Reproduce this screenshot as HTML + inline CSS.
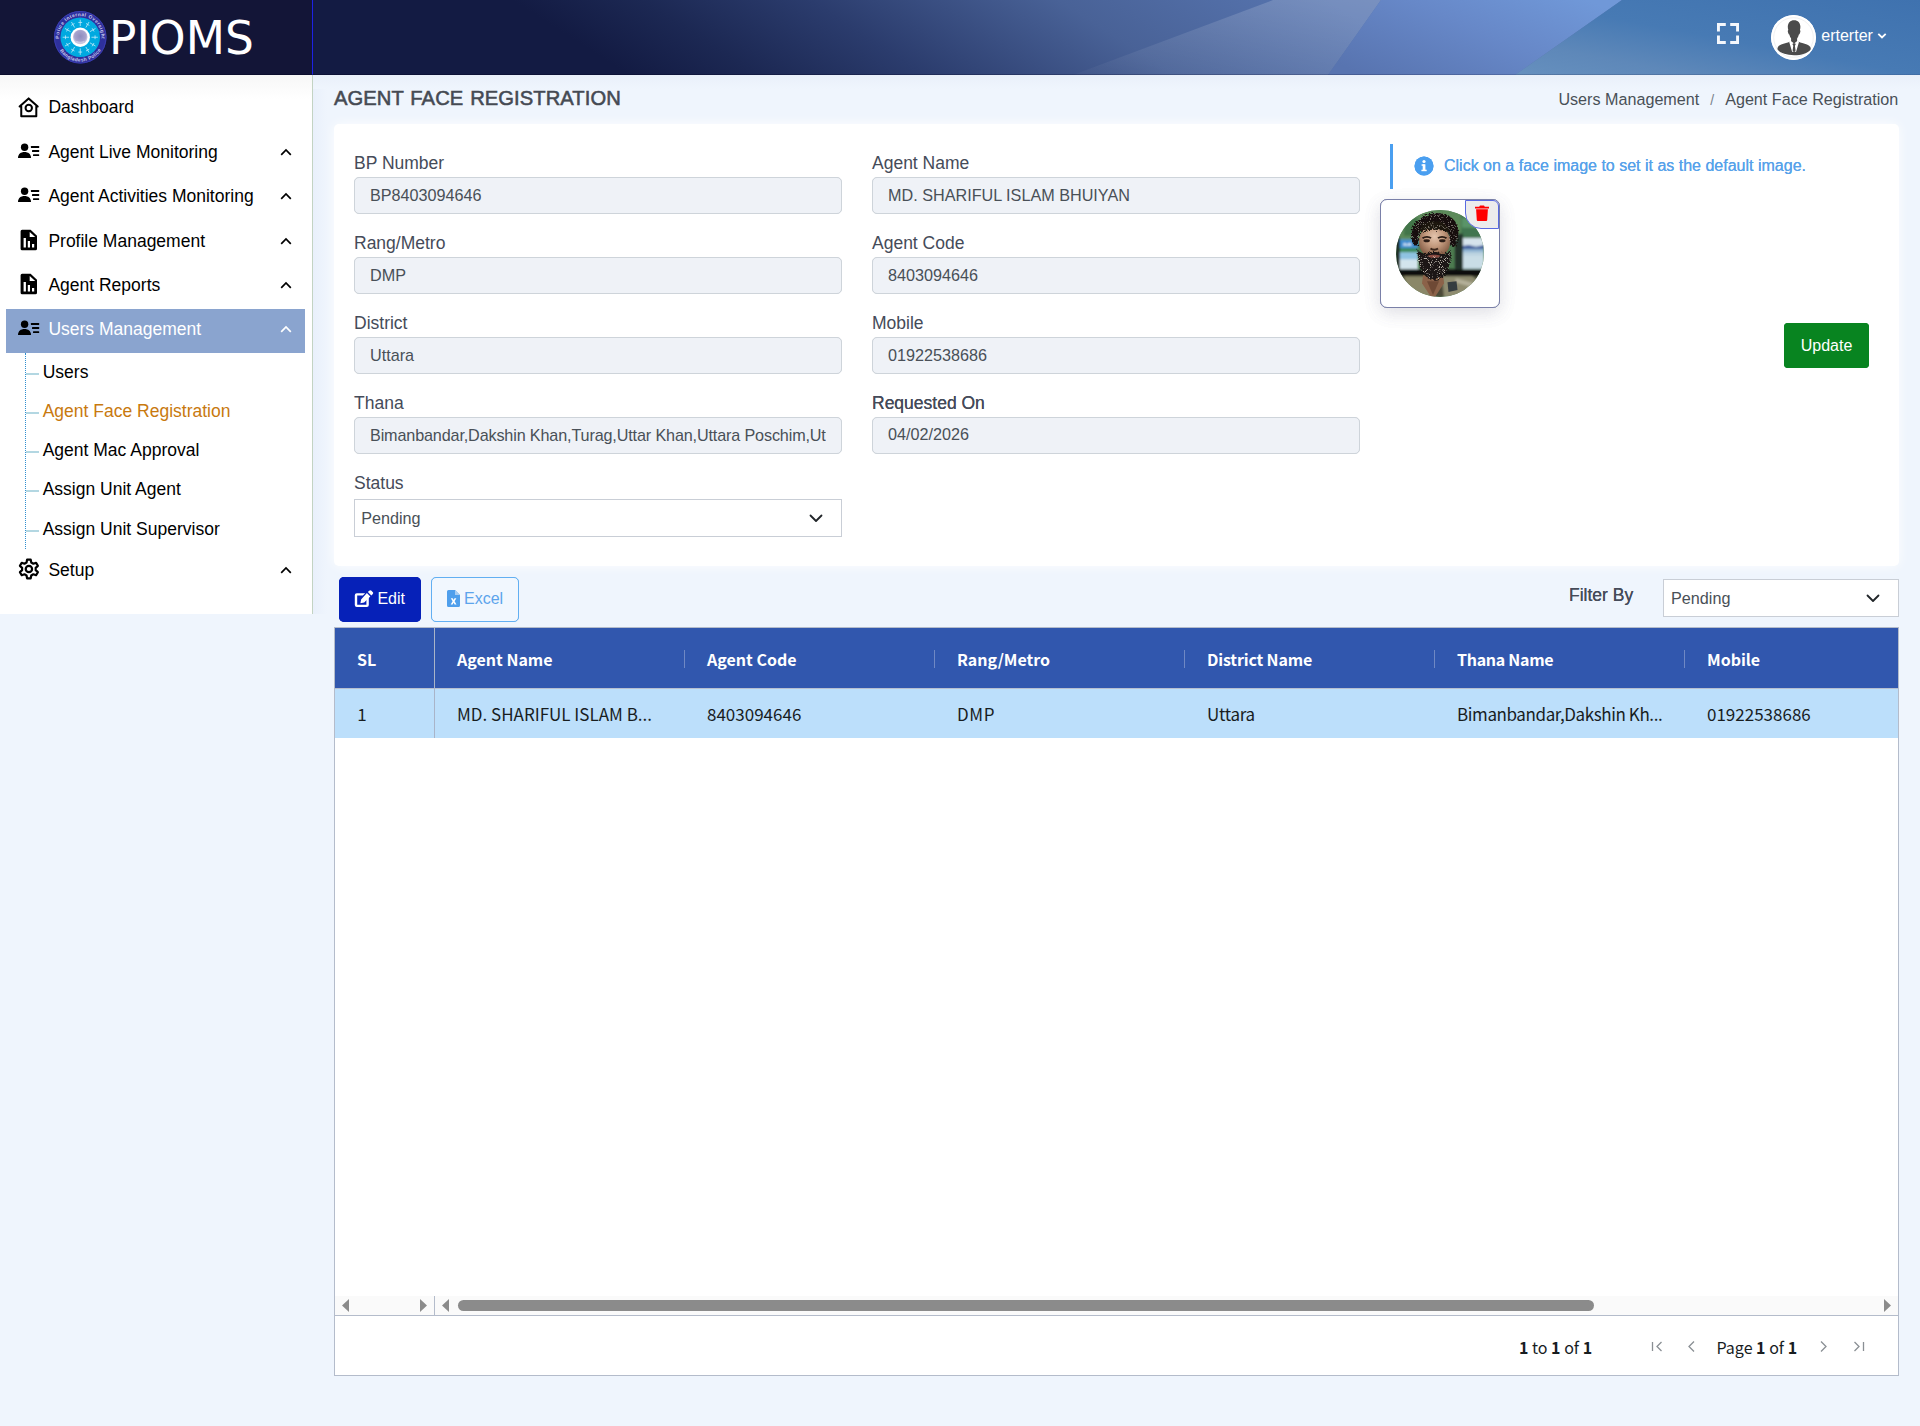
<!DOCTYPE html>
<html lang="en">
<head>
<meta charset="utf-8">
<title>PIOMS - Agent Face Registration</title>
<style>
*{box-sizing:border-box;margin:0;padding:0}
html,body{width:1920px;height:1426px;overflow:hidden}
body{font-family:"Liberation Sans",Arial,sans-serif;background:#eff5fd;color:#212529;position:relative}
.abs{position:absolute}
/* ---------- header ---------- */
#hdr{position:absolute;left:0;top:0;width:1920px;height:75px;background:#131b43;overflow:hidden}
#hdr svg.bg{position:absolute;left:312px;top:0}
#logo{position:absolute;left:0;top:0;width:313px;height:75px;background:#131537;border-right:1px solid #1d22e6}
#logo .txt{position:absolute;left:109px;top:10.500px;font-family:"DejaVu Sans","Liberation Sans",sans-serif;font-size:45.500px;line-height:56px;color:#fff;letter-spacing:0}
#logo svg{position:absolute;left:54px;top:11.200px}
#fs{position:absolute;left:1717px;top:23px}
#avatar{position:absolute;left:1771px;top:15px;width:45px;height:45px;border-radius:50%;background:#fff;overflow:hidden}
#uname{position:absolute;left:1821.300px;top:25.600px;font-size:16px;line-height:20px;color:#fff}
#ucaret{position:absolute;left:1877.400px;top:31.700px}
/* ---------- sidebar ---------- */
#side{position:absolute;left:0;top:75px;width:313px;height:539px;background:linear-gradient(#f7f7f7 0,#fff 24px);border-right:1px solid #c3d3c3}
.mi{position:absolute;left:6px;width:299px;height:44px;font-size:17.5px;line-height:44px;color:#000;white-space:nowrap}
.mi .ic{position:absolute;left:11px;top:11px;width:24px;height:22px;overflow:visible}
.mi .lb{position:absolute;left:42.400px;top:0}
.mi .ch{position:absolute;left:274px;top:18px}
.mi.act{background:#8aa4cf;color:#fff}
.mi.act .lb{top:-1.6px}.mi.act .ic{top:9.400px}.mi.act .ch{top:16.400px}
.sub{position:absolute;left:42.700px;font-size:17.500px;line-height:22px;color:#000;white-space:nowrap}
.sub.on{color:#c8790f}
.tick{position:absolute;left:26px;width:13px;height:2px;background:#b3d7e2}
#tree{position:absolute;left:25px;top:353px;width:0;height:196px;border-left:1px dotted #2f8fd0}
/* ---------- page head ---------- */
#title{position:absolute;left:334px;top:86.300px;font-size:20.200px;line-height:24px;color:#454a53;font-weight:400;white-space:nowrap;-webkit-text-stroke:.55px #454a53;letter-spacing:.06px;word-spacing:1.200px}
#crumb{position:absolute;right:21.700px;top:89.300px;font-size:16.150px;line-height:20px;color:#495057;white-space:nowrap}
#crumb i{font-style:normal;color:#7a828c;margin:0 11px;font-size:14px}
/* ---------- form card ---------- */
#card{position:absolute;left:334px;top:124px;width:1565px;height:442px;background:#fff;border-radius:5px;box-shadow:0 0 12px rgba(255,255,255,.9)}
.fl{position:absolute;font-size:17.5px;line-height:22px;color:#454b59;white-space:nowrap}
.fi{position:absolute;width:488px;height:37px;border:1px solid #ced4da;border-radius:5px;background:#eff2f7;font-size:16.2px;line-height:35px;color:#495057;padding:0 15px;white-space:nowrap;overflow:hidden}
.fi span{display:block;overflow:hidden}
.sel{position:absolute;border:1px solid #c9ced6;background:#fff;font-size:16.2px;color:#495057;white-space:nowrap}
#info{position:absolute;left:1390px;top:144px;width:3px;height:45px;background:#4a9ff0}
#infot{position:absolute;left:1444px;top:156px;font-size:16px;line-height:20px;color:#57a2ea;white-space:nowrap}
#face{position:absolute;left:1380px;top:199px;width:120px;height:109px;border:1px solid #7a80a8;border-radius:7px;background:#fff;box-shadow:0 5px 18px rgba(100,100,130,.11)}
#del{position:absolute;left:1465px;top:200px;width:34px;height:29px;background:#ececec;border:1px solid #5a6be0;border-radius:0 6px 0 16px}
#upd{position:absolute;left:1784px;top:323px;width:85px;height:45px;background:#088420;border-radius:4px;color:#fff;font-size:16px;line-height:45px;text-align:center}
/* ---------- toolbar ---------- */
#edit{position:absolute;left:339px;top:577px;width:82px;height:45px;background:#0621b8;border-radius:5px;color:#fff;font-size:16px;line-height:43px}
#excel{position:absolute;left:431px;top:577px;width:88px;height:45px;border:1px solid #62aff2;border-radius:5px;color:#5ca4ec;font-size:16px;line-height:41px;background:#f1f7fe}
#flt{position:absolute;left:1569px;top:584px;font-size:17.5px;line-height:22px;color:#454b59}
/* ---------- grid ---------- */
#grid{position:absolute;left:334px;top:627px;width:1565px;height:749px;background:#fff;border:1px solid #b4bccb;font-family:"Noto Sans CJK SC","Liberation Sans",sans-serif}
#gh{position:absolute;left:0;top:0;width:1563px;height:60px;background:#3157ae}
.hc{position:absolute;top:0;height:60px;line-height:62px;font-size:16px;font-weight:700;color:#fff;white-space:nowrap}
.hs{position:absolute;top:21.500px;width:1px;height:18px;background:#6f88c4}
#gr{position:absolute;left:0;top:60px;width:1563px;height:50px;background:#bcdffb}
.gc{position:absolute;top:0;height:50px;line-height:52.400px;font-size:17px;color:#181d1f;white-space:nowrap}
#pin{position:absolute;left:99px;top:0;width:1px;height:110px;background:#a9b4c8}
#pin2{position:absolute;left:99px;top:668px;width:1px;height:20px;background:#b4bccb;z-index:3}
#sb{position:absolute;left:0;top:668px;width:1563px;height:20px;background:#fafafa;border-bottom:1px solid #b4bccb}
#thumb{position:absolute;left:123px;top:672px;width:1136px;height:11px;border-radius:6px;background:#8b8b8b}
#pg{position:absolute;left:0;top:688px;width:1563px;height:59px;font-size:16px;line-height:62px;color:#181d1f;white-space:nowrap}
#pg b{font-weight:700}
</style>
</head>
<body>
<!-- HEADER -->
<div id="hdr">
<svg class="bg" width="1608" height="75" viewBox="0 0 1608 75">
<defs>
<linearGradient id="g0" gradientUnits="userSpaceOnUse" x1="200" y1="0" x2="740" y2="-842">
<stop offset="0" stop-color="#131b43"/><stop offset=".07" stop-color="#1c2853"/><stop offset=".16" stop-color="#2b3c6d"/><stop offset=".295" stop-color="#496297"/><stop offset=".44" stop-color="#5775b0"/><stop offset="1" stop-color="#5775b0"/>
</linearGradient>
<linearGradient id="g1" x1="0" y1="1" x2="1" y2="0">
<stop offset="0" stop-color="#fff" stop-opacity=".02"/><stop offset="1" stop-color="#fff" stop-opacity=".2"/>
</linearGradient>
<linearGradient id="g2" x1="0" y1=".8" x2="1" y2=".2">
<stop offset="0" stop-color="#5874b0"/><stop offset=".55" stop-color="#6788c8"/><stop offset="1" stop-color="#7098d8"/>
</linearGradient>
<linearGradient id="g3" x1="0" y1="1" x2="1" y2="0">
<stop offset="0" stop-color="#6690be"/><stop offset=".22" stop-color="#5e88b9"/><stop offset=".5" stop-color="#477ab4"/><stop offset="1" stop-color="#3f72af"/>
</linearGradient>
</defs>
<rect width="1608" height="75" fill="url(#g0)"/>
<polygon points="761,75 961,0 1069,0 1016,75" fill="url(#g1)"/>
<polygon points="1069,0 1310,0 1203,75 1016,75" fill="url(#g2)"/>
<polygon points="1310,0 1608,0 1608,75 1203,75" fill="url(#g3)"/>
</svg>
<svg id="fs" width="22" height="21" viewBox="0 0 22 21" fill="none" stroke="#f4f7fc" stroke-width="2.900"><path d="M1.450 8.600V1.450H8.800M13.200 1.450H20.550V8.600M20.550 12.400V19.550H13.200M8.800 19.550H1.450V12.400"/></svg>
<div id="avatar"><svg width="45" height="45" viewBox="0 0 45 45"><circle cx="22.500" cy="22.500" r="22.500" fill="#fff"/><circle cx="22.500" cy="22.500" r="19.800" fill="none" stroke="#ececec" stroke-width=".8"/>
<path d="M23.100 5.200C19.300 5.200 16.800 7.900 16.800 11.800c0 1.300.2 2.300.5 3.300-.5.300-.6 1-.4 1.800l.5 1.700c.2.600.5.900.9 1 .4 1.600 1 2.900 1.800 3.900v2.300l-1.500.9c-1 .5-2.300.9-3.600 1.300-3.400 1-6.700 1.900-7.900 3.700-.7 1-.8 2-.4 3 2.700 3.500 8.900 5.500 16.400 5.500s13.700-2 16.400-5.500c.4-1 .3-2-.4-3-1.200-1.800-4.500-2.700-7.900-3.700-1.300-.4-2.600-.8-3.600-1.300l-1.500-.9v-2.300c.8-1 1.400-2.300 1.800-3.900.4-.1.700-.4.900-1l.5-1.700c.2-.8.100-1.500-.4-1.800.3-1 .5-2 .5-3.300 0-3.900-2.500-6.600-6.300-6.600z" fill="#4b4b4b"/>
<path d="M19.300 25.600l3.800 2.900 3.800-2.900 1.100 1.300-2.900 9.800h-4l-2.900-9.800z" fill="#fff"/>
<path d="M22 28.200h2.200l.5 1.400-.8 1.100.7 4.800-1.500 1.900-1.500-1.900.7-4.800-.8-1.100z" fill="#4b4b4b"/></svg></div>
<div id="uname">erterter</div>
<svg id="ucaret" width="10" height="8" viewBox="0 0 10 8" fill="none" stroke="#fff" stroke-width="1.8"><path d="M1.300 1.800l3.700 3.700 3.700-3.700"/></svg>
</div>
<div id="logo">
<svg width="52.500" height="52.500" viewBox="0 0 52.500 52.500">
<defs><path id="arcT" d="M5.100 27.730A21.200 21.200 0 1 1 47.400 27.730"/><path id="arcB" d="M5.850 39.500A24.300 24.300 0 0 0 46.650 39.500"/>
<radialGradient id="emb" cx=".5" cy=".45" r=".55"><stop offset="0" stop-color="#8f8cbd"/><stop offset=".7" stop-color="#a6a3cd"/><stop offset="1" stop-color="#d9d8ec"/></radialGradient></defs>
<circle cx="26.250" cy="26.250" r="26.250" fill="#2e309c"/>
<circle cx="26.250" cy="26.250" r="25.800" fill="none" stroke="#3c40b4" stroke-width=".9"/>
<circle cx="26.250" cy="26.250" r="19.800" fill="#00a9e0"/>
<path d="M26.25 14.65L26.25 9.05M27.75 11.45L24.75 11.45M20.45 16.20L17.65 11.35M20.15 12.68L17.55 14.18M16.20 20.45L11.35 17.65M14.18 17.55L12.68 20.15M14.65 26.25L9.05 26.25M11.45 24.75L11.45 27.75M16.20 32.05L11.35 34.85M12.68 32.35L14.18 34.95M20.45 36.30L17.65 41.15M17.55 38.32L20.15 39.82M26.25 37.85L26.25 43.45M24.75 41.05L27.75 41.05M32.05 36.30L34.85 41.15M32.35 39.82L34.95 38.32M36.30 32.05L41.15 34.85M38.32 34.95L39.82 32.35M37.85 26.25L43.45 26.25M41.05 27.75L41.05 24.75M36.30 20.45L41.15 17.65M39.82 20.15L38.32 17.55M32.05 16.20L34.85 11.35M34.95 14.18L32.35 12.68" stroke="#c9edfb" stroke-width=".9" stroke-linecap="round" fill="none" opacity=".85"/>
<circle cx="26.250" cy="26.250" r="9.700" fill="#fff"/>
<circle cx="26.250" cy="26" r="7.300" fill="url(#emb)"/>
<path d="M22.500 29.800q3.750 1.800 7.500 0l.8 1.600q-4.550 2-9.100 0z" fill="#c9c8e2"/>
<text font-family="Liberation Sans,sans-serif" font-size="4.900" font-weight="700" fill="#c9c9ee"><textPath href="#arcT" startOffset="0" textLength="69" lengthAdjust="spacing">Police Internal Oversight</textPath></text>
<text font-family="Liberation Sans,sans-serif" font-size="4.900" font-weight="700" fill="#c9c9ee"><textPath href="#arcB" startOffset="0" textLength="49" lengthAdjust="spacing">Bangladesh Police</textPath></text>
</svg>
<div class="txt">PIOMS</div></div>

<!-- SIDEBAR -->
<div id="side"></div>
<div class="mi" style="top:85px"><svg class="ic" viewBox="0 0 24 22" fill="none" stroke="#000" stroke-width="2" stroke-linejoin="round"><path d="M4.250 10.600H2.600L11.650 2.400l9.050 8.200H19.300V20.200H4.250z"/><circle cx="11.750" cy="12" r="3.200"/></svg><span class="lb">Dashboard</span></div>
<div class="mi" style="top:130px"><svg class="ic" viewBox="0 0 24 22" fill="#000"><circle cx="7.600" cy="6.300" r="3.700"/><path d="M1 16.900c0-4 2.800-6 6.500-6s6.500 2 6.500 6z"/><rect x="13.900" y="5.100" width="8.300" height="1.800" rx=".5"/><rect x="15" y="9.100" width="7.200" height="1.800" rx=".5"/><rect x="16" y="13.200" width="6.200" height="1.800" rx=".5"/></svg><span class="lb">Agent Live Monitoring</span><svg class="ch" width="12" height="8" viewBox="0 0 12 8" fill="none" stroke="#000" stroke-width="1.700"><path d="M1.200 6.800L6 2l4.800 4.800"/></svg></div>
<div class="mi" style="top:174px"><svg class="ic" viewBox="0 0 24 22" fill="#000"><circle cx="7.600" cy="6.300" r="3.700"/><path d="M1 16.900c0-4 2.800-6 6.500-6s6.500 2 6.500 6z"/><rect x="13.900" y="5.100" width="8.300" height="1.800" rx=".5"/><rect x="15" y="9.100" width="7.200" height="1.800" rx=".5"/><rect x="16" y="13.200" width="6.200" height="1.800" rx=".5"/></svg><span class="lb">Agent Activities Monitoring</span><svg class="ch" width="12" height="8" viewBox="0 0 12 8" fill="none" stroke="#000" stroke-width="1.700"><path d="M1.200 6.800L6 2l4.800 4.800"/></svg></div>
<div class="mi" style="top:219px"><svg class="ic" viewBox="0 0 24 22" fill="#000"><path d="M5.100 -.3H13.600L20 5.700V18.700a1.500 1.500 0 0 1-1.500 1.500H5.100a1.500 1.500 0 0 1-1.500-1.500V1.200A1.500 1.500 0 0 1 5.100 -.3z"/><path d="M12.700 2v5h5.500z" fill="#fff"/><rect x="6.600" y="8" width="2.300" height="9.500" fill="#fff"/><rect x="10.800" y="11" width="2.200" height="6.500" fill="#fff"/><rect x="15" y="14" width="2.200" height="3.500" fill="#fff"/></svg><span class="lb">Profile Management</span><svg class="ch" width="12" height="8" viewBox="0 0 12 8" fill="none" stroke="#000" stroke-width="1.700"><path d="M1.200 6.800L6 2l4.800 4.800"/></svg></div>
<div class="mi" style="top:263px"><svg class="ic" viewBox="0 0 24 22" fill="#000"><path d="M5.100 -.3H13.600L20 5.700V18.700a1.500 1.500 0 0 1-1.500 1.500H5.100a1.500 1.500 0 0 1-1.500-1.500V1.200A1.500 1.500 0 0 1 5.100 -.3z"/><path d="M12.700 2v5h5.500z" fill="#fff"/><rect x="6.600" y="8" width="2.300" height="9.500" fill="#fff"/><rect x="10.800" y="11" width="2.200" height="6.500" fill="#fff"/><rect x="15" y="14" width="2.200" height="3.500" fill="#fff"/></svg><span class="lb">Agent Reports</span><svg class="ch" width="12" height="8" viewBox="0 0 12 8" fill="none" stroke="#000" stroke-width="1.700"><path d="M1.200 6.800L6 2l4.800 4.800"/></svg></div>
<div class="mi act" style="top:309px"><svg class="ic" viewBox="0 0 24 22" fill="#000"><circle cx="7.600" cy="6.300" r="3.700"/><path d="M1 16.900c0-4 2.800-6 6.500-6s6.500 2 6.500 6z"/><rect x="13.900" y="5.100" width="8.300" height="1.800" rx=".5"/><rect x="15" y="9.100" width="7.200" height="1.800" rx=".5"/><rect x="16" y="13.200" width="6.200" height="1.800" rx=".5"/></svg><span class="lb">Users Management</span><svg class="ch" width="12" height="8" viewBox="0 0 12 8" fill="none" stroke="#fff" stroke-width="1.700"><path d="M1.200 6.800L6 2l4.800 4.800"/></svg></div>
<div id="tree"></div>
<div class="tick" style="top:373px"></div><div class="sub" style="top:360.6px">Users</div>
<div class="tick" style="top:412px"></div><div class="sub on" style="top:399.6px">Agent Face Registration</div>
<div class="tick" style="top:451px"></div><div class="sub" style="top:438.7px">Agent Mac Approval</div>
<div class="tick" style="top:490px"></div><div class="sub" style="top:477.9px">Assign Unit Agent</div>
<div class="tick" style="top:530px"></div><div class="sub" style="top:518.1px">Assign Unit Supervisor</div>
<div class="mi" style="top:548px"><svg class="ic" viewBox="0 0 24 22" fill="none" stroke="#000" stroke-width="2.200" stroke-linejoin="round"><path d="M14.26 3.52 L13.71 0.67 L10.09 0.67 L9.54 3.52 L7.46 4.71 L4.73 3.77 L2.92 6.91 L5.10 8.80 L5.10 11.20 L2.92 13.09 L4.73 16.23 L7.46 15.29 L9.54 16.48 L10.09 19.33 L13.71 19.33 L14.26 16.48 L16.34 15.29 L19.07 16.23 L20.88 13.09 L18.70 11.20 L18.70 8.80 L20.88 6.91 L19.07 3.77 L16.34 4.71Z"/><circle cx="11.9" cy="10.0" r="3.200"/></svg><span class="lb">Setup</span><svg class="ch" width="12" height="8" viewBox="0 0 12 8" fill="none" stroke="#000" stroke-width="1.700"><path d="M1.200 6.800L6 2l4.800 4.800"/></svg></div>

<!-- PAGE -->
<div class="abs" style="left:313px;top:75px;width:14px;height:539px;background:linear-gradient(to right,#e9f0fb,#eff5fd)"></div>
<div class="abs" style="left:0;top:74px;width:1920px;height:1px;background:linear-gradient(to right,rgba(0,0,30,.4) 0,rgba(0,0,30,.3) 40%,rgba(0,0,40,.1) 100%)"></div>
<div class="abs" style="left:313px;top:75px;width:1607px;height:14px;background:linear-gradient(#e9f0fa,#eff5fd)"></div>
<div id="title">AGENT FACE REGISTRATION</div>
<div id="crumb">Users Management<i>/</i>Agent Face Registration</div>
<div id="card"></div>
<div class="fl" style="left:354px;top:152px">BP Number</div>
<div class="fl" style="left:354px;top:232px">Rang/Metro</div>
<div class="fl" style="left:354px;top:312px">District</div>
<div class="fl" style="left:354px;top:392px">Thana</div>
<div class="fl" style="left:354px;top:472px">Status</div>
<div class="fl" style="left:872px;top:152px">Agent Name</div>
<div class="fl" style="left:872px;top:232px">Agent Code</div>
<div class="fl" style="left:872px;top:312px">Mobile</div>
<div class="fl" style="left:872px;top:392px">Requested On</div>
<div class="fi" style="left:354px;top:177px"><span>BP8403094646</span></div>
<div class="fi" style="left:354px;top:257px"><span>DMP</span></div>
<div class="fi" style="left:354px;top:337px"><span>Uttara</span></div>
<div class="fi" style="left:354px;top:417px;letter-spacing:-.15px"><span>Bimanbandar,Dakshin Khan,Turag,Uttar Khan,Uttara Poschim,Uttara Purbo</span></div>
<div class="fi" style="left:872px;top:177px"><span>MD. SHARIFUL ISLAM BHUIYAN</span></div>
<div class="fi" style="left:872px;top:257px"><span>8403094646</span></div>
<div class="fi" style="left:872px;top:337px"><span>01922538686</span></div>
<div class="fi" style="left:872px;top:417px;line-height:33px"><span>04/02/2026</span></div>
<div class="sel" style="left:354px;top:499px;width:488px;height:38px;line-height:37px;padding-left:6.200px">Pending<svg width="14" height="9" viewBox="0 0 14 9" fill="none" stroke="#212529" stroke-width="1.800" stroke-linecap="round" stroke-linejoin="round" style="position:absolute;right:18px;top:14px"><path d="M1.500 1.500L7 7l5.500-5.500"/></svg></div>
<div id="info"></div>
<svg class="abs" style="left:1413.500px;top:155.500px" width="20" height="20" viewBox="0 0 20 20"><circle cx="10" cy="10" r="9.500" fill="#4a9ff0"/><rect x="8.700" y="8.300" width="2.700" height="6.400" fill="#fff"/><rect x="7.600" y="8.300" width="3" height="1.500" fill="#fff"/><rect x="7.400" y="13.700" width="5.300" height="1.500" fill="#fff"/><circle cx="10" cy="5.500" r="1.600" fill="#fff"/></svg>
<div id="infot">Click on a face image to set it as the default image.</div>
<div id="face"></div>
<svg class="abs" style="left:1396px;top:210px" width="88" height="87" viewBox="0 0 88 88" preserveAspectRatio="none">
<defs><clipPath id="fc"><circle cx="44" cy="44" r="44"/></clipPath>
<radialGradient id="skin" cx=".5" cy=".35" r=".65"><stop offset="0" stop-color="#e3c4ad"/><stop offset=".45" stop-color="#c39a7e"/><stop offset="1" stop-color="#7a523c"/></radialGradient>
<filter id="bl" x="-10%" y="-10%" width="120%" height="120%"><feGaussianBlur stdDeviation=".9"/></filter>
<filter id="bl2" x="-10%" y="-10%" width="120%" height="120%"><feGaussianBlur stdDeviation=".6"/></filter>
<filter id="curl" x="-5%" y="-5%" width="110%" height="110%"><feTurbulence type="fractalNoise" baseFrequency=".55" numOctaves="2" seed="7" result="n"/><feDisplacementMap in="SourceGraphic" in2="n" scale="5"/></filter>
<filter id="spk" x="0" y="0" width="100%" height="100%"><feTurbulence type="fractalNoise" baseFrequency=".9" numOctaves="1" seed="3"/><feColorMatrix values="0 0 0 0 .85  0 0 0 0 .8  0 0 0 0 .7  0 0 0 9 -5.200"/><feComposite in2="SourceGraphic" operator="in"/></filter>
</defs>
<g clip-path="url(#fc)">
<rect width="88" height="88" fill="#4d7a50"/>
<g filter="url(#bl)">
<rect x="0" y="0" width="65" height="29" fill="#5b8a5a"/>
<rect x="8" y="8" width="14" height="18" fill="#43744a"/>
<rect x="65" y="0" width="23" height="28" fill="#3f7550"/>
<rect x="66" y="8" width="20" height="10" fill="#5a9468"/>
<rect x="0" y="28" width="4" height="32" fill="#1c2a22"/>
<rect x="4" y="30" width="18" height="30" fill="#b9d9ea"/>
<rect x="4" y="30" width="18" height="9" fill="#3f8fd3"/>
<path d="M8 33l3 2 3-2 2 3h-9z" fill="#e9f3fa"/>
<rect x="4" y="38.500" width="18" height="4.500" fill="#3a8a5c"/>
<rect x="4" y="43" width="18" height="7" fill="#8fc3e2"/>
<rect x="4" y="50" width="18" height="10" fill="#d3e4ec"/>
<rect x="59" y="24" width="8" height="36" fill="#22332a"/>
<rect x="67" y="28.500" width="21" height="31" fill="#b9d2e0"/>
<rect x="67" y="28.500" width="21" height="7.500" fill="#d6e3ec"/>
<path d="M67 39.500v-3l6-1 7 2 8-2v4z" fill="#3f5d9c"/>
<rect x="67" y="39.500" width="21" height="3" fill="#8fb4d2"/>
<rect x="67" y="46" width="21" height="13" fill="#c9dde6"/>
<rect x="0" y="60" width="88" height="7" fill="#0d100f"/>
<rect x="0" y="67" width="88" height="21" fill="#4b4a38"/>
<path d="M8 67h22l8 21H14z" fill="#8a8767"/>
<path d="M46 67l30 0 8 6-14 15H48z" fill="#8f8c70"/>
<path d="M60 69l22 6-3 4-20-6z" fill="#b4b09a"/>
</g>
<g filter="url(#bl2)">
<path d="M27 66h20l1 8-9 14h-4l-9-14z" fill="#8b6248"/>
<path d="M31 72l6 14 6-14z" fill="#6e4a36"/>
<path d="M16 30c-3-10 4-22 18-26 12-3 25 2 28 14 1 7 0 13-3 19l-5-1-2-14c-8-3-20-3-28 0l-2 14-4 0c-1-2-2-4-2-6z" fill="#15110e" filter="url(#curl)"/>
<ellipse cx="38.500" cy="32" rx="15.500" ry="17" fill="url(#skin)"/>
<path d="M24 18c3-5 9-7 14-7s12 2 15 7l1 6c-4-3-10-4-16-4s-11 1-15 4z" fill="#1a1511" filter="url(#curl)"/>
<path d="M21.500 40c0 7 1 15 4 21 3 6 7 9.500 13 9.500s10-3.500 13-9.500c3-6 3.500-14 3-21-2 3-5 4.500-8 4.500-2.500-1.500-5.500-2-8-2s-5.500.5-8 2c-3 0-7-1.500-9-4.500z" fill="#1b1713" filter="url(#curl)"/>
<path d="M31.500 46.500c3-1.500 10-1.500 13 0-2 2.600-11 2.600-13 0z" fill="#8a4c42"/>
<path d="M26.500 28.500c2.500-1.800 6.500-1.800 8.500 0M42 28.500c2-1.800 6-1.800 8.500 0" stroke="#2a1c14" stroke-width="1.800" fill="none"/>
<ellipse cx="30.700" cy="31" rx="3.200" ry="1.500" fill="#2b1a12"/><ellipse cx="46.300" cy="31" rx="3.200" ry="1.500" fill="#2b1a12"/>
<path d="M34.500 39c2 1.500 5.500 1.500 7.500 0" stroke="#3a251a" stroke-width="2" fill="none"/>
<path d="M51.500 73l9-1 1 9-9 2z" fill="#363c40"/>
</g>
<path d="M21.500 42c0 7 1 14 4 19 3 6 7 9.500 13 9.500s10-3.500 13-9.500c3-5 3.500-12 3-19-2 3-5 4.500-8 4.500h-16c-3 0-7-1.500-9-4.500z" fill="#d8cfbd" filter="url(#spk)" opacity=".75"/>
<path d="M16 30c-3-10 4-22 18-26 12-3 25 2 28 14 1 7 0 13-3 19l-5-1-2-14c-8-3-20-3-28 0l-2 14-4 0z" fill="#c9c3b2" filter="url(#spk)" opacity=".45"/>
</g></svg>
<div id="del"><svg width="14" height="16" viewBox="0 0 14 16" style="position:absolute;left:9px;top:4px"><path d="M0 1.800h4.200L5 .6h4l.8 1.200H14v1.600H0z" fill="#f00"/><path d="M1.100 4.300h11.800L12.200 15a1 1 0 0 1-1 .9H2.800a1 1 0 0 1-1-.9z" fill="#f00"/></svg></div>
<div id="upd">Update</div>
<div id="edit"><svg width="20" height="18" viewBox="0 0 20 18" style="position:absolute;left:14.800px;top:12.500px"><path d="M2.800 3.200h8.400l-2.400 2.400H3.200v9.200h9.200V9.500l2.400-2.400v8a2 2 0 0 1-2 2H2.800a2 2 0 0 1-2-2V5.200a2 2 0 0 1 2-2z" fill="#fff"/><path d="M15.200.8a1.600 1.600 0 0 1 2.300 0l1.100 1.100a1.600 1.600 0 0 1 0 2.300l-1.300 1.300-3.400-3.400zM12.900 3.100l3.400 3.400-6.100 6.100-3.800.7.700-3.800z" fill="#fff"/></svg><span style="position:absolute;left:38.400px;top:0">Edit</span></div>
<div id="excel"><svg width="13" height="17" viewBox="0 0 13 17" style="position:absolute;left:15px;top:12px"><path d="M0 1.500A1.500 1.500 0 0 1 1.500 0H8l5 5v10.500A1.500 1.500 0 0 1 11.500 17h-10A1.500 1.500 0 0 1 0 15.500z" fill="#4f9fec"/><path d="M8 0v5h5" fill="#a9cdf1"/><path d="M3.800 8.300h1.900l.9 1.700.9-1.700h1.900l-1.800 3 1.900 3.100H7.600l-1-1.900-1 1.900H3.700l1.900-3.100z" fill="#fff"/></svg><span style="position:absolute;left:32px;top:0">Excel</span></div>
<div id="flt">Filter By</div>
<div class="sel" style="left:1663px;top:579px;width:236px;height:38px;line-height:36px;padding-left:7px">Pending<svg width="14" height="9" viewBox="0 0 14 9" fill="none" stroke="#212529" stroke-width="1.800" stroke-linecap="round" stroke-linejoin="round" style="position:absolute;right:18px;top:14px"><path d="M1.500 1.500L7 7l5.500-5.500"/></svg></div>

<!-- GRID -->
<div id="grid">
<div id="gh">
<div class="hc" style="left:22px">SL</div>
<div class="hc" style="left:122px">Agent Name</div>
<div class="hc" style="left:372px">Agent Code</div>
<div class="hc" style="left:622px">Rang/Metro</div>
<div class="hc" style="left:872px;letter-spacing:-0.16px">District Name</div>
<div class="hc" style="left:1122px;letter-spacing:-0.29px">Thana Name</div>
<div class="hc" style="left:1372px">Mobile</div>
<div class="hs" style="left:349px"></div>
<div class="hs" style="left:599px"></div>
<div class="hs" style="left:849px"></div>
<div class="hs" style="left:1099px"></div>
<div class="hs" style="left:1349px"></div>
</div>
<div id="gr">
<div class="gc" style="left:22.300px">1</div>
<div class="gc" style="left:122px">MD. SHARIFUL ISLAM B...</div>
<div class="gc" style="left:372px">8403094646</div>
<div class="gc" style="left:622px;letter-spacing:0.6px">DMP</div>
<div class="gc" style="left:872px;letter-spacing:-0.3px">Uttara</div>
<div class="gc" style="left:1122px;letter-spacing:-0.4px">Bimanbandar,Dakshin Kh...</div>
<div class="gc" style="left:1372px">01922538686</div>
</div>
<div class="abs" style="left:0;top:60px;width:1563px;height:1px;background:#b7bfcf"></div><div id="pin"></div><div id="pin2"></div>
<div id="sb"></div>
<svg class="abs" style="left:6.500px;top:671px" width="7" height="13" viewBox="0 0 7 13"><polygon points="7,0 7,13 0,6.500" fill="#8b8b8b"/></svg>
<svg class="abs" style="left:84.500px;top:671px" width="7" height="13" viewBox="0 0 7 13"><polygon points="0,0 0,13 7,6.500" fill="#8b8b8b"/></svg>
<svg class="abs" style="left:106.500px;top:671px" width="7" height="13" viewBox="0 0 7 13"><polygon points="7,0 7,13 0,6.500" fill="#8b8b8b"/></svg>
<svg class="abs" style="left:1548.500px;top:671px" width="7" height="13" viewBox="0 0 7 13"><polygon points="0,0 0,13 7,6.500" fill="#8b8b8b"/></svg>
<div id="thumb"></div>
<div id="pg">
<span class="abs" style="left:1184px;top:0"><b>1</b> to <b>1</b> of <b>1</b></span>
<span class="abs" style="left:1381.500px;top:0">Page <b>1</b> of <b>1</b></span>
<svg class="abs" style="left:1315.5px;top:24px" width="12" height="13" viewBox="0 0 12 13" stroke="#8a8f94" stroke-width="1.300" fill="none"><path d="M1.500 2v9M10.500 2L6 6.500l4.500 4.500"/></svg>
<svg class="abs" style="left:1351px;top:24px" width="12" height="13" viewBox="0 0 12 13" stroke="#8a8f94" stroke-width="1.300" fill="none"><path d="M8 1.500L3 6.500l5 5"/></svg>
<svg class="abs" style="left:1482px;top:24px" width="12" height="13" viewBox="0 0 12 13" stroke="#8a8f94" stroke-width="1.300" fill="none"><path d="M4 1.500l5 5-5 5"/></svg>
<svg class="abs" style="left:1517.5px;top:24px" width="12" height="13" viewBox="0 0 12 13" stroke="#8a8f94" stroke-width="1.300" fill="none"><path d="M10.500 2v9M1.500 2L6 6.500 1.500 11"/></svg>
</div>
</div>
</body>
</html>;letter-spacing:0.28px">Mobile</div>
<div class="fl" style="left:872px;top:392px">Requested On</div>
<div class="fi" style="left:354px;top:177px"><span>BP8403094646</span></div>
<div class="fi" style="left:354px;top:257px"><span>DMP</span></div>
<div class="fi" style="left:354px;top:337px"><span>Uttara</span></div>
<div class="fi" style="left:354px;top:417px;letter-spacing:-.15px"><span>Bimanbandar,Dakshin Khan,Turag,Uttar Khan,Uttara Poschim,Uttara Purbo</span></div>
<div class="fi" style="left:872px;top:177px"><span>MD. SHARIFUL ISLAM BHUIYAN</span></div>
<div class="fi" style="left:872px;top:257px"><span>8403094646</span></div>
<div class="fi" style="left:872px;top:337px"><span>01922538686</span></div>
<div class="fi" style="left:872px;top:417px;line-height:33px"><span>04/02/2026</span></div>
<div class="sel" style="left:354px;top:499px;width:488px;height:38px;line-height:37px;padding-left:6.200px">Pending<svg width="14" height="9" viewBox="0 0 14 9" fill="none" stroke="#212529" stroke-width="1.800" stroke-linecap="round" stroke-linejoin="round" style="position:absolute;right:18px;top:14px"><path d="M1.500 1.500L7 7l5.500-5.500"/></svg></div>
<div id="info"></div>
<svg class="abs" style="left:1413.500px;top:155.500px" width="20" height="20" viewBox="0 0 20 20"><circle cx="10" cy="10" r="9.500" fill="#4a9ff0"/><rect x="8.700" y="8.300" width="2.700" height="6.400" fill="#fff"/><rect x="7.600" y="8.300" width="3" height="1.500" fill="#fff"/><rect x="7.400" y="13.700" width="5.300" height="1.500" fill="#fff"/><circle cx="10" cy="5.500" r="1.600" fill="#fff"/></svg>
<div id="infot">Click on a face image to set it as the default image.</div>
<div id="face"></div>
<svg class="abs" style="left:1396px;top:210px" width="88" height="87" viewBox="0 0 88 88" preserveAspectRatio="none">
<defs><clipPath id="fc"><circle cx="44" cy="44" r="44"/></clipPath>
<radialGradient id="skin" cx=".5" cy=".35" r=".65"><stop offset="0" stop-color="#e3c4ad"/><stop offset=".45" stop-color="#c39a7e"/><stop offset="1" stop-color="#7a523c"/></radialGradient>
<filter id="bl" x="-10%" y="-10%" width="120%" height="120%"><feGaussianBlur stdDeviation=".9"/></filter>
<filter id="bl2" x="-10%" y="-10%" width="120%" height="120%"><feGaussianBlur stdDeviation=".6"/></filter>
<filter id="curl" x="-5%" y="-5%" width="110%" height="110%"><feTurbulence type="fractalNoise" baseFrequency=".55" numOctaves="2" seed="7" result="n"/><feDisplacementMap in="SourceGraphic" in2="n" scale="5"/></filter>
<filter id="spk" x="0" y="0" width="100%" height="100%"><feTurbulence type="fractalNoise" baseFrequency=".9" numOctaves="1" seed="3"/><feColorMatrix values="0 0 0 0 .85  0 0 0 0 .8  0 0 0 0 .7  0 0 0 9 -5.200"/><feComposite in2="SourceGraphic" operator="in"/></filter>
</defs>
<g clip-path="url(#fc)">
<rect width="88" height="88" fill="#4d7a50"/>
<g filter="url(#bl)">
<rect x="0" y="0" width="65" height="29" fill="#5b8a5a"/>
<rect x="8" y="8" width="14" height="18" fill="#43744a"/>
<rect x="65" y="0" width="23" height="28" fill="#3f7550"/>
<rect x="66" y="8" width="20" height="10" fill="#5a9468"/>
<rect x="0" y="28" width="4" height="32" fill="#1c2a22"/>
<rect x="4" y="30" width="18" height="30" fill="#b9d9ea"/>
<rect x="4" y="30" width="18" height="9" fill="#3f8fd3"/>
<path d="M8 33l3 2 3-2 2 3h-9z" fill="#e9f3fa"/>
<rect x="4" y="38.500" width="18" height="4.500" fill="#3a8a5c"/>
<rect x="4" y="43" width="18" height="7" fill="#8fc3e2"/>
<rect x="4" y="50" width="18" height="10" fill="#d3e4ec"/>
<rect x="59" y="24" width="8" height="36" fill="#22332a"/>
<rect x="67" y="28.500" width="21" height="31" fill="#b9d2e0"/>
<rect x="67" y="28.500" width="21" height="7.500" fill="#d6e3ec"/>
<path d="M67 39.500v-3l6-1 7 2 8-2v4z" fill="#3f5d9c"/>
<rect x="67" y="39.500" width="21" height="3" fill="#8fb4d2"/>
<rect x="67" y="46" width="21" height="13" fill="#c9dde6"/>
<rect x="0" y="60" width="88" height="7" fill="#0d100f"/>
<rect x="0" y="67" width="88" height="21" fill="#4b4a38"/>
<path d="M8 67h22l8 21H14z" fill="#8a8767"/>
<path d="M46 67l30 0 8 6-14 15H48z" fill="#8f8c70"/>
<path d="M60 69l22 6-3 4-20-6z" fill="#b4b09a"/>
</g>
<g filter="url(#bl2)">
<path d="M27 66h20l1 8-9 14h-4l-9-14z" fill="#8b6248"/>
<path d="M31 72l6 14 6-14z" fill="#6e4a36"/>
<path d="M16 30c-3-10 4-22 18-26 12-3 25 2 28 14 1 7 0 13-3 19l-5-1-2-14c-8-3-20-3-28 0l-2 14-4 0c-1-2-2-4-2-6z" fill="#15110e" filter="url(#curl)"/>
<ellipse cx="38.500" cy="32" rx="15.500" ry="17" fill="url(#skin)"/>
<path d="M24 18c3-5 9-7 14-7s12 2 15 7l1 6c-4-3-10-4-16-4s-11 1-15 4z" fill="#1a1511" filter="url(#curl)"/>
<path d="M21.500 40c0 7 1 15 4 21 3 6 7 9.500 13 9.500s10-3.500 13-9.500c3-6 3.500-14 3-21-2 3-5 4.500-8 4.500-2.500-1.500-5.500-2-8-2s-5.500.5-8 2c-3 0-7-1.500-9-4.500z" fill="#1b1713" filter="url(#curl)"/>
<path d="M31.500 46.500c3-1.500 10-1.500 13 0-2 2.600-11 2.600-13 0z" fill="#8a4c42"/>
<path d="M26.500 28.500c2.500-1.800 6.500-1.800 8.500 0M42 28.500c2-1.800 6-1.800 8.500 0" stroke="#2a1c14" stroke-width="1.800" fill="none"/>
<ellipse cx="30.700" cy="31" rx="3.200" ry="1.500" fill="#2b1a12"/><ellipse cx="46.300" cy="31" rx="3.200" ry="1.500" fill="#2b1a12"/>
<path d="M34.500 39c2 1.500 5.500 1.500 7.500 0" stroke="#3a251a" stroke-width="2" fill="none"/>
<path d="M51.500 73l9-1 1 9-9 2z" fill="#363c40"/>
</g>
<path d="M21.500 42c0 7 1 14 4 19 3 6 7 9.500 13 9.500s10-3.500 13-9.500c3-5 3.500-12 3-19-2 3-5 4.500-8 4.500h-16c-3 0-7-1.500-9-4.500z" fill="#d8cfbd" filter="url(#spk)" opacity=".75"/>
<path d="M16 30c-3-10 4-22 18-26 12-3 25 2 28 14 1 7 0 13-3 19l-5-1-2-14c-8-3-20-3-28 0l-2 14-4 0z" fill="#c9c3b2" filter="url(#spk)" opacity=".45"/>
</g></svg>
<div id="del"><svg width="14" height="16" viewBox="0 0 14 16" style="position:absolute;left:9px;top:4px"><path d="M0 1.800h4.200L5 .6h4l.8 1.200H14v1.600H0z" fill="#f00"/><path d="M1.100 4.300h11.800L12.200 15a1 1 0 0 1-1 .9H2.800a1 1 0 0 1-1-.9z" fill="#f00"/></svg></div>
<div id="upd">Update</div>
<div id="edit"><svg width="20" height="18" viewBox="0 0 20 18" style="position:absolute;left:14.800px;top:12.500px"><path d="M2.800 3.200h8.400l-2.400 2.400H3.200v9.200h9.200V9.500l2.400-2.400v8a2 2 0 0 1-2 2H2.800a2 2 0 0 1-2-2V5.200a2 2 0 0 1 2-2z" fill="#fff"/><path d="M15.200.8a1.600 1.600 0 0 1 2.300 0l1.100 1.100a1.600 1.600 0 0 1 0 2.300l-1.300 1.300-3.400-3.400zM12.900 3.100l3.400 3.400-6.100 6.100-3.800.7.700-3.800z" fill="#fff"/></svg><span style="position:absolute;left:38.400px;top:0">Edit</span></div>
<div id="excel"><svg width="13" height="17" viewBox="0 0 13 17" style="position:absolute;left:15px;top:12px"><path d="M0 1.500A1.500 1.500 0 0 1 1.500 0H8l5 5v10.500A1.500 1.500 0 0 1 11.500 17h-10A1.500 1.500 0 0 1 0 15.500z" fill="#4f9fec"/><path d="M8 0v5h5" fill="#a9cdf1"/><path d="M3.800 8.300h1.900l.9 1.700.9-1.700h1.900l-1.800 3 1.900 3.100H7.600l-1-1.900-1 1.900H3.700l1.900-3.100z" fill="#fff"/></svg><span style="position:absolute;left:32px;top:0">Excel</span></div>
<div id="flt">Filter By</div>
<div class="sel" style="left:1663px;top:579px;width:236px;height:38px;line-height:36px;padding-left:7px">Pending<svg width="14" height="9" viewBox="0 0 14 9" fill="none" stroke="#212529" stroke-width="1.800" stroke-linecap="round" stroke-linejoin="round" style="position:absolute;right:18px;top:14px"><path d="M1.500 1.500L7 7l5.500-5.500"/></svg></div>

<!-- GRID -->
<div id="grid">
<div id="gh">
<div class="hc" style="left:22px">SL</div>
<div class="hc" style="left:122px">Agent Name</div>
<div class="hc" style="left:372px">Agent Code</div>
<div class="hc" style="left:622px">Rang/Metro</div>
<div class="hc" style="left:872px;letter-spacing:-0.16px">District Name</div>
<div class="hc" style="left:1122px;letter-spacing:-0.29px">Thana Name</div>
<div class="hc" style="left:1372px">Mobile</div>
<div class="hs" style="left:349px"></div>
<div class="hs" style="left:599px"></div>
<div class="hs" style="left:849px"></div>
<div class="hs" style="left:1099px"></div>
<div class="hs" style="left:1349px"></div>
</div>
<div id="gr">
<div class="gc" style="left:22.300px">1</div>
<div class="gc" style="left:122px">MD. SHARIFUL ISLAM B...</div>
<div class="gc" style="left:372px">8403094646</div>
<div class="gc" style="left:622px;letter-spacing:0.6px">DMP</div>
<div class="gc" style="left:872px;letter-spacing:-0.3px">Uttara</div>
<div class="gc" style="left:1122px;letter-spacing:-0.4px">Bimanbandar,Dakshin Kh...</div>
<div class="gc" style="left:1372px">01922538686</div>
</div>
<div class="abs" style="left:0;top:60px;width:1563px;height:1px;background:#b7bfcf"></div><div id="pin"></div><div id="pin2"></div>
<div id="sb"></div>
<svg class="abs" style="left:6.500px;top:671px" width="7" height="13" viewBox="0 0 7 13"><polygon points="7,0 7,13 0,6.500" fill="#8b8b8b"/></svg>
<svg class="abs" style="left:84.500px;top:671px" width="7" height="13" viewBox="0 0 7 13"><polygon points="0,0 0,13 7,6.500" fill="#8b8b8b"/></svg>
<svg class="abs" style="left:106.500px;top:671px" width="7" height="13" viewBox="0 0 7 13"><polygon points="7,0 7,13 0,6.500" fill="#8b8b8b"/></svg>
<svg class="abs" style="left:1548.500px;top:671px" width="7" height="13" viewBox="0 0 7 13"><polygon points="0,0 0,13 7,6.500" fill="#8b8b8b"/></svg>
<div id="thumb"></div>
<div id="pg">
<span class="abs" style="left:1184px;top:0"><b>1</b> to <b>1</b> of <b>1</b></span>
<span class="abs" style="left:1381.500px;top:0">Page <b>1</b> of <b>1</b></span>
<svg class="abs" style="left:1315.5px;top:24px" width="12" height="13" viewBox="0 0 12 13" stroke="#8a8f94" stroke-width="1.300" fill="none"><path d="M1.500 2v9M10.500 2L6 6.500l4.500 4.500"/></svg>
<svg class="abs" style="left:1351px;top:24px" width="12" height="13" viewBox="0 0 12 13" stroke="#8a8f94" stroke-width="1.300" fill="none"><path d="M8 1.500L3 6.500l5 5"/></svg>
<svg class="abs" style="left:1482px;top:24px" width="12" height="13" viewBox="0 0 12 13" stroke="#8a8f94" stroke-width="1.300" fill="none"><path d="M4 1.500l5 5-5 5"/></svg>
<svg class="abs" style="left:1517.5px;top:24px" width="12" height="13" viewBox="0 0 12 13" stroke="#8a8f94" stroke-width="1.300" fill="none"><path d="M10.500 2v9M1.500 2L6 6.500 1.500 11"/></svg>
</div>
</div>
</body>
</html>
